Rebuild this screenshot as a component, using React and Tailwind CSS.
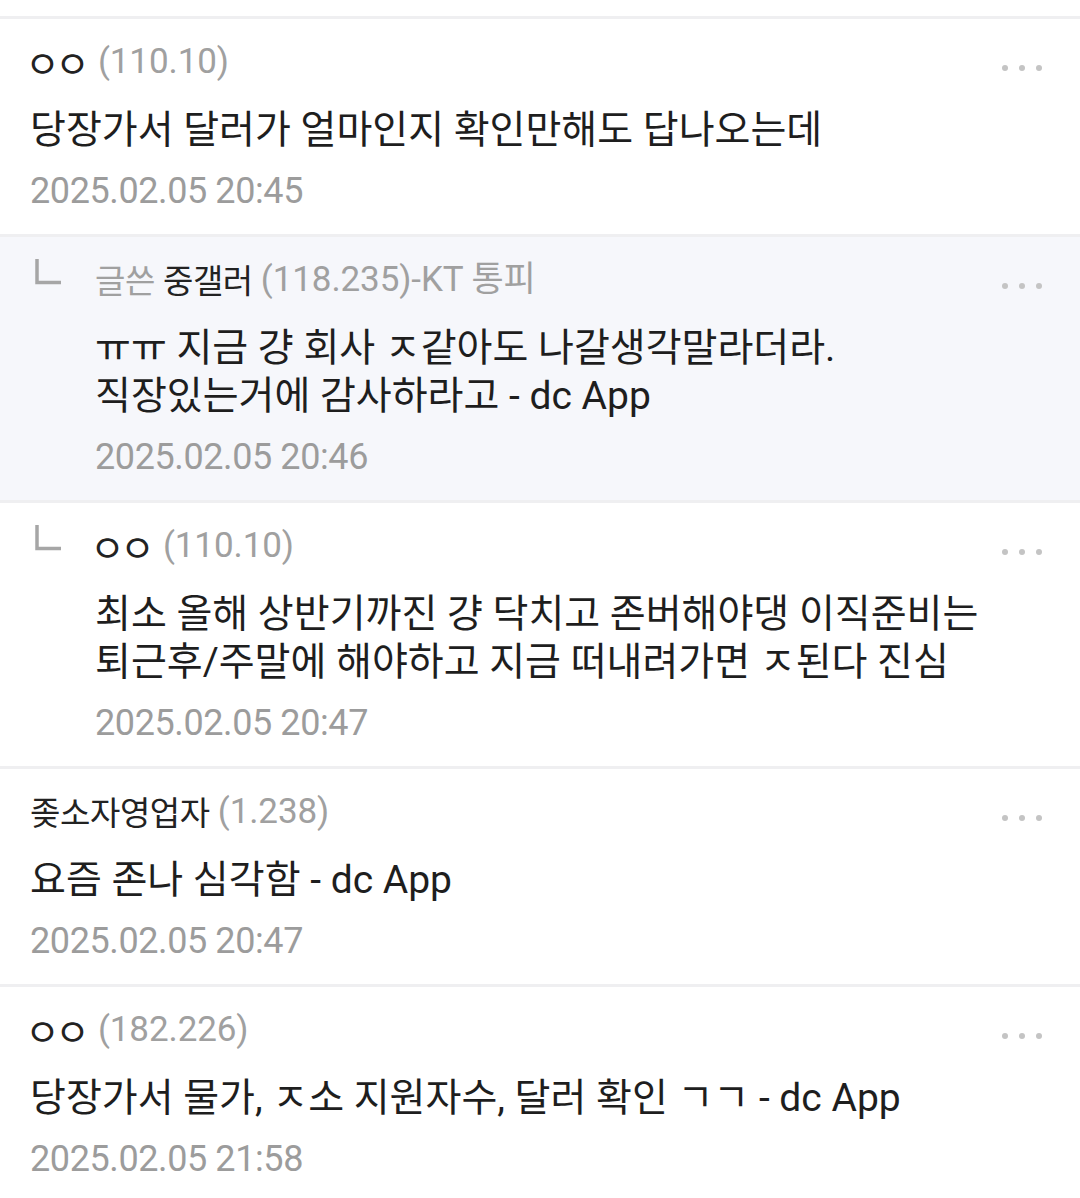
import React from 'react'

const KR = "font-['Noto_Sans_CJK_KR',sans-serif]"
const LAT = "font-['Roboto','Noto_Sans_CJK_KR',sans-serif]"

const COMMENTS = [
  {
    name: 'ㅇㅇ',
    ip: '(110.10)',
    body: ['당장가서 달러가 얼마인지 확인만해도 답나오는데'],
    date: '2025.02.05 20:45',
  },
  {
    reply: true,
    writer: true,
    name: '중갤러',
    ip: '(118.235)-KT 통피',
    body: ['ㅠㅠ 지금 걍 회사 ㅈ같아도 나갈생각말라더라.', '직장있는거에 감사하라고 - dc App'],
    date: '2025.02.05 20:46',
  },
  {
    reply: true,
    name: 'ㅇㅇ',
    ip: '(110.10)',
    body: ['최소 올해 상반기까진 걍 닥치고 존버해야댕 이직준비는', '퇴근후/주말에 해야하고 지금 떠내려가면 ㅈ된다 진심'],
    date: '2025.02.05 20:47',
  },
  {
    name: '좆소자영업자',
    ip: '(1.238)',
    body: ['요즘 존나 심각함 - dc App'],
    date: '2025.02.05 20:47',
  },
  {
    name: 'ㅇㅇ',
    ip: '(182.226)',
    body: ['당장가서 물가, ㅈ소 지원자수, 달러 확인 ㄱㄱ - dc App'],
    date: '2025.02.05 21:58',
  },
]

function Dots() {
  return (
    <div className="flex items-center gap-[11px] mt-[25px]">
      <span className="w-[6px] h-[6px] rounded-full bg-[#c4c4c4]" />
      <span className="w-[6px] h-[6px] rounded-full bg-[#c4c4c4]" />
      <span className="w-[6px] h-[6px] rounded-full bg-[#c4c4c4]" />
    </div>
  )
}

function ReplyMark() {
  return (
    <svg width="28" height="27" viewBox="0 0 28 27" className="ml-[5px]">
      <path d="M2 1 V24.5 H26" fill="none" stroke="#a6a6a6" strokeWidth="3.5" />
    </svg>
  )
}

function Comment({ c }) {
  // anonymous "ㅇㅇ" nick renders with bigger jamo in the app font
  const jamo = c.name === 'ㅇㅇ'
  return (
    <div className={`flex px-[30px] pt-[21px] pb-[21px] ${c.writer ? 'bg-[#f6f7fb]' : 'bg-white'}`}>
      {c.reply && (
        <div className="w-[65px] shrink-0">
          <ReplyMark />
        </div>
      )}
      <div className="flex-1 min-w-0">
        <div className="flex items-start justify-between pr-[8px]">
          <div className="flex items-center h-[44px] gap-[8px] whitespace-nowrap">
            {c.writer && (
              <span className={`${KR} text-[33px] tracking-[-0.4px] text-[#a0a0a0]`}>글쓴</span>
            )}
            {jamo ? (
              <span className={`${KR} text-[38px] leading-[44px] tracking-[-5px] -ml-[5px] pr-[5px] text-[#222]`}>{c.name}</span>
            ) : (
              <span className={`${KR} text-[33px] tracking-[-0.4px] text-[#222]`}>{c.name}</span>
            )}
            <span className={`${LAT} text-[35px] tracking-[-0.1px] text-[#a0a0a0]`}>{c.ip}</span>
          </div>
          <Dots />
        </div>
        <div className="mt-[22px]">
          {c.body.map((line, i) => (
            <div key={i} className={`${LAT} text-[39px] leading-[48px] text-[#1e1e1e] whitespace-nowrap`}>
              {line}
            </div>
          ))}
        </div>
        <div className={`${LAT} mt-[15px] h-[44px] flex items-center text-[36px] tracking-[-0.4px] text-[#9c9c9c]`}>
          {c.date}
        </div>
      </div>
    </div>
  )
}

export default function App() {
  return (
    <div className="w-[1080px] h-[1198px] overflow-hidden bg-white">
      <div className="h-[16px]" />
      {COMMENTS.map((c, i) => (
        <div key={i}>
          <div className="h-[3px] bg-[#efeff1]" />
          <Comment c={c} />
        </div>
      ))}
    </div>
  )
}
